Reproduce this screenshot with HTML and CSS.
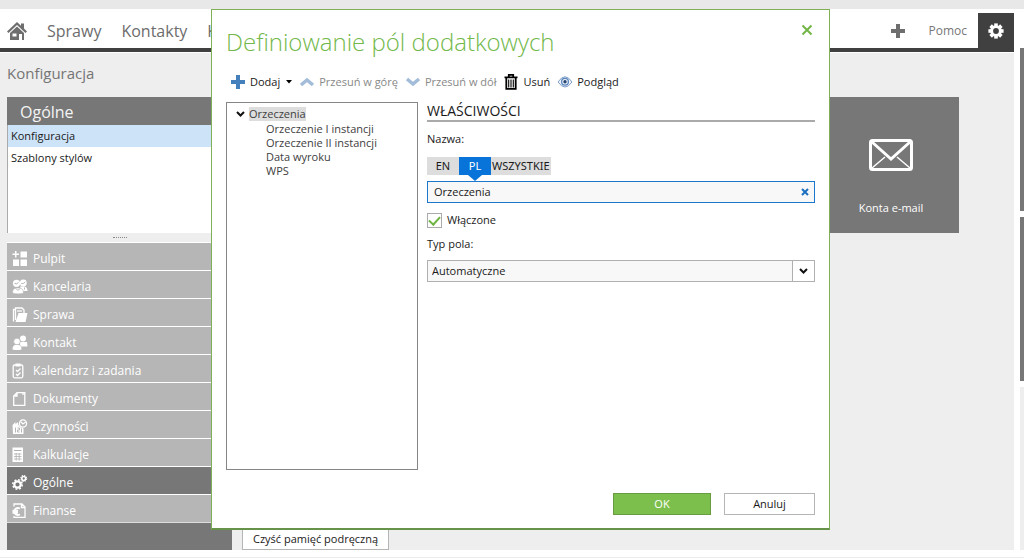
FILE: index.html
```html
<!DOCTYPE html>
<html lang="pl">
<head>
<meta charset="utf-8">
<meta name="viewport" content="width=device-width, initial-scale=1">
<title>Konfiguracja</title>
<link rel="stylesheet" href="styles.css">
</head>
<body>
<div class="page">
  <div class="app">
    <header class="topbar">
      <nav class="mainnav">
        <a href="#" class="home" aria-label="Start"><svg width="20" height="20" viewBox="0 0 20 20"><path fill="#6e6e6e" d="M10 1 L0 10.500 L1.500 12 L10 4 L18.500 12 L20 10.500 L17 7.600 V2.500 H14 V4.800Z"/><path fill="#6e6e6e" d="M10 5.500 L3 12 V19 H12 V13 H15 V19 H17 V12Z"/><path fill="#fff" d="M5.500 12.500 H9.500 V15.500 H5.500Z"/></svg></a>
        <a href="#">Sprawy</a>
        <a href="#">Kontakty</a>
        <a href="#">K</a>
      </nav>
      <div class="tools">
        <button class="add" type="button" aria-label="Nowy"><svg width="16" height="16" viewBox="0 0 16 16"><path fill="#6e6e6e" d="M6 1h4v5h5v4h-5v5H6v-5H1V6h5z"/></svg></button>
        <a href="#" class="help">Pomoc</a>
        <button class="gear" type="button" aria-label="Ustawienia"><svg width="16" height="16" viewBox="-8 -8 16 16"><g fill="#fff"><rect x="-1.800" y="-7.600" width="3.600" height="15.200"/><rect x="-1.800" y="-7.600" width="3.600" height="15.200" transform="rotate(45)"/><rect x="-1.800" y="-7.600" width="3.600" height="15.200" transform="rotate(90)"/><rect x="-1.800" y="-7.600" width="3.600" height="15.200" transform="rotate(135)"/><circle r="5.800"/></g><circle r="2.900" fill="#404040"/></svg></button>
      </div>
    </header>
    <main class="main">
      <h1 class="heading">Konfiguracja</h1>
      <div class="columns">
        <aside class="side">
          <h2 class="side-title">Ogólne</h2>
          <ul class="pages">
            <li><a href="#" class="current">Konfiguracja</a></li>
            <li><a href="#">Szablony stylów</a></li>
          </ul>
          <div class="grip"><span></span></div>
          <nav class="modules">
            <a href="#"><svg viewBox="0 0 16 16"><path d="M3 0h1.500v2.500H7V4H4.500v2.500H3V4H0.500V2.500H3zM8.500 0.500H15v6H8.500zM1 8.500h6V15H1zM8.500 8.500H15V15H8.500z"/></svg>Pulpit</a>
            <a href="#"><svg viewBox="0 0 16 16"><circle cx="4.500" cy="4.300" r="3.600"/><circle cx="11.300" cy="4" r="3.400"/><path d="M8 7.500h5q2.500 1 2.500 4.500H9z"/><path stroke="#b6b6b6" stroke-width=".6" d="M.5 14c0-3.500 1.500-4.700 4-5h3c2.500.3 4 1.700 4 5-3 1.200-8 1.200-11 0z"/><path fill="none" stroke="#b6b6b6" stroke-width="1" d="M2.500 4.500q2.500 1 4-1M9.300 4.500q2.500.5 4-1.500M4 9.500l2 2 2-2M12.500 8.500v2"/></svg>Kancelaria</a>
            <a href="#"><svg viewBox="0 0 16 16"><path class="line" d="M1.500 14.500V2.500H3M3.500 13V1H10l2 2v3"/><path d="M6.500 6H15.500L13.500 15H3.500z"/><path class="line" d="M5 4h5"/></svg>Sprawa</a>
            <a href="#"><svg viewBox="0 0 16 16"><circle cx="11" cy="3.500" r="3"/><path d="M7 7h8l.5 4.500H9z"/><circle cx="5" cy="6.500" r="3.300" stroke="#b6b6b6" stroke-width=".7"/><path d="M0.500 14.500c0-3 1-4.500 3-4.500h3c2 0 3 1.500 3 4.500q-4.500 1-9 0z"/></svg>Kontakt</a>
            <a href="#"><svg viewBox="0 0 16 16"><rect x="1.200" y="2" width="9.600" height="12.800" rx="1.500" class="line"/><path d="M3.500 0.500h5v3h-5z"/><path class="line" d="M4 7l1.500 1.500L8.500 5.500M4 11l1.500 1.500L8.500 9.500"/></svg>Kalendarz i zadania</a>
            <a href="#"><svg viewBox="0 0 16 16"><path class="line" d="M5 1.700H12.800V14.300H1.700V5zM5 1.700V5H1.700M11 1.700V4"/></svg>Dokumenty</a>
            <a href="#"><svg viewBox="0 0 16 16"><path d="M.5 6l3-3v2.500l2-2.500 1 3 5 3.500V15H1z"/><circle cx="11" cy="4.500" r="4.500" fill="#b6b6b6"/><circle cx="11" cy="4.500" r="3.600" class="line"/><path class="line" d="M9 3l2 2 2.500-2"/><path stroke="#b6b6b6" fill="none" d="M3.500 8.500v5M5.500 9h2v2h-2v2h2M9.500 9.500v4"/></svg>Czynności</a>
            <a href="#"><svg viewBox="0 0 16 16"><path d="M.5.500h10.500v14.500H.5z"/><path stroke="#b0b0b0" fill="none" d="M2 3.500h7.500"/><path stroke="#b0b0b0" fill="none" d="M2 7h7.500M2 9.500h7.500M2 12h7.500M4.200 6v7.500M7.200 6v7.500" stroke-width=".8"/></svg>Kalkulacje</a>
            <a href="#" class="active"><svg viewBox="0 0 16 16"><circle cx="5.500" cy="9.500" r="3.200" fill="none" stroke="#fff" stroke-width="2.200"/><circle cx="5.500" cy="9.500" r="4.700" fill="none" stroke="#fff" stroke-width="1.600" stroke-dasharray="1.900 1.790"/><circle cx="11.700" cy="3.500" r="1.900" fill="none" stroke="#fff" stroke-width="1.500"/><circle cx="11.700" cy="3.500" r="2.900" fill="none" stroke="#fff" stroke-width="1.200" stroke-dasharray="1.200 1.080"/></svg>Ogólne</a>
            <a href="#"><svg viewBox="0 0 16 16"><path class="line" d="M2 3.500V1h8l3 3v10.300H2V13M9.500 1v3.500H13"/><path fill="none" stroke="#fff" stroke-width="1.900" d="M8 5.500C4.500 4 2.500 6 2.500 8.500S4.500 13 8 11.500M.5 7.700H6M.5 9.800H6"/></svg>Finanse</a>
          </nav>
          <div class="side-foot"></div>
        </aside>
        <section class="content">
          <a href="#" class="tile">
            <svg width="44" height="32" viewBox="0 0 44 32" fill="none" stroke="#fff"><rect x="1.500" y="1.500" width="41" height="29" rx="2" stroke-width="3"/><path stroke-width="3" d="M3 3L22 20L41 3"/><path stroke-width="1.500" d="M3 29L16 18M41 29L28 18"/></svg>
            <span>Konta e-mail</span>
          </a>
          <button type="button" class="btn clear">Czyść pamięć podręczną</button>
        </section>
      </div>
    </main>
  </div>
  <div class="rail"><i class="dark"></i><i class="dark"></i><i></i></div>
</div>

<div class="dialog" role="dialog" aria-labelledby="dlg-title">
  <header class="dlg-head">
    <h2 id="dlg-title">Definiowanie pól dodatkowych</h2>
    <button type="button" class="close" aria-label="Zamknij"><svg width="12" height="12" viewBox="0 0 12 12"><path fill="none" stroke="#72b545" stroke-width="2" d="M1.500 1.500l9 9M10.500 1.500l-9 9"/></svg></button>
  </header>
  <div class="toolbar">
    <button type="button"><svg width="16" height="16" viewBox="0 0 16 16"><path fill="#4580bd" d="M6 1h4v5h5v4h-5v5H6v-5H1V6h5z"/></svg>Dodaj<svg class="drop" width="6" height="4" viewBox="0 0 6 4"><path d="M0 0h6L3 3.500z"/></svg></button>
    <button type="button" class="off"><svg width="16" height="16" viewBox="0 0 16 16"><path fill="none" stroke="#a3bcd9" stroke-width="3.500" d="M2 11l6-5 6 5"/></svg>Przesuń w górę</button>
    <button type="button" class="off"><svg width="16" height="16" viewBox="0 0 16 16"><path fill="none" stroke="#a3bcd9" stroke-width="3.500" d="M2 5l6 5 6-5"/></svg>Przesuń w dół</button>
    <button type="button"><svg width="16" height="16" viewBox="0 0 16 16" fill="none" stroke="#000"><path stroke-width="1.800" d="M1.500 3.300h13M3.300 4v10.800h9.400V4M5.800 2.500V.9h4.400v1.600"/><path stroke-width="1.100" d="M5.700 5.500v8M8 5.500v8M10.300 5.500v8"/></svg>Usuń</button>
    <button type="button"><svg width="16" height="16" viewBox="0 0 16 16" fill="none"><path stroke="#7f9fc8" fill="#eef3f9" d="M1 8Q8-2.500 15 8Q8 18 1 8z"/><circle cx="8" cy="7.800" r="3.400" stroke="#5b86bd" stroke-width="1.300"/><circle cx="8" cy="7.800" r="1.700" fill="#27466f"/></svg>Podgląd</button>
  </div>
  <div class="dlg-body">
    <div class="tree">
      <ul>
        <li class="root"><svg width="9" height="8" viewBox="0 0 9 8"><path fill="none" stroke="#111" stroke-width="2" d="M1 2l3.500 3.500L8 2"/></svg><span>Orzeczenia</span></li>
        <li>Orzeczenie I instancji</li>
        <li>Orzeczenie II instancji</li>
        <li>Data wyroku</li>
        <li>WPS</li>
      </ul>
    </div>
    <form class="props">
      <h3>WŁAŚCIWOŚCI</h3>
      <label class="lbl name-lbl" for="name">Nazwa:</label>
      <div class="langs">
        <button type="button">EN</button>
        <button type="button" class="on">PL</button>
        <button type="button" class="all">WSZYSTKIE</button>
      </div>
      <div class="field">
        <input id="name" type="text" value="Orzeczenia">
        <button type="button" aria-label="Wyczyść"><svg width="8" height="8" viewBox="0 0 8 8"><path fill="none" stroke="#1b6fc0" stroke-width="2" d="M1 1l6 6M7 1L1 7"/></svg></button>
      </div>
      <label class="check"><input type="checkbox" checked>Włączone</label>
      <label class="lbl type-lbl" for="type">Typ pola:</label>
      <div class="select">
        <select id="type"><option>Automatyczne</option></select>
        <span class="arrow"><svg width="9" height="8" viewBox="0 0 9 8"><path fill="none" stroke="#111" stroke-width="2" d="M1 2l3.500 3.500L8 2"/></svg></span>
      </div>
    </form>
  </div>
  <footer class="dlg-foot">
    <button type="button" class="btn ok">OK</button>
    <button type="button" class="btn cancel">Anuluj</button>
  </footer>
</div>
</body>
</html>
```
FILE: styles.css
```css
* { box-sizing: border-box; }
body {
  margin: 0;
  background: #fff;
  color: #1a1a1a;
  font: 11px/16px "Open Sans", "Noto Sans", sans-serif;
}
h1, h2, h3, ul { margin: 0; padding: 0; font-weight: 400; list-style: none; }
a { color: inherit; text-decoration: none; }
button, input, select { font: inherit; color: inherit; border: 0; padding: 0; margin: 0; background: none; border-radius: 0; }
svg { display: block; flex: none; }

.page {
  display: flex;
  gap: 6px;
  min-height: 100vh;
  border-top: 9px solid #e8e8e8;
  border-bottom: 1px solid #ececec;
  padding-bottom: 7px;
}
.app { flex: 1; display: flex; flex-direction: column; min-width: 0; }
.rail { width: 4px; padding-top: 39px; display: flex; flex-direction: column; gap: 6px; }
.rail i { flex: 1; background: #eee; }
.rail .dark { background: #777; }

.topbar { display: flex; justify-content: space-between; height: 43px; border-bottom: 4px solid #404040; }
.mainnav { display: flex; align-items: center; gap: 20px; padding: 5px 0 0 7px; font-size: 16px; line-height: 24px; color: #6c6c6c; }
.tools { display: flex; align-items: center; gap: 22px; padding-top: 4px; }
.help { font-size: 12px; line-height: 20px; color: #777; }
.gear { width: 36px; height: 39px; background: #404040; align-self: flex-start; display: flex; justify-content: center; padding-top: 10px; }
.tools .gear { margin-left: -11px; }

.main { flex: 1; display: flex; flex-direction: column; margin-top: 1px; padding: 8px 0 0 7px; background: #eee; }
.heading { font-size: 15px; line-height: 24px; color: #757575; }
.columns { flex: 1; display: flex; gap: 10px; margin-top: 12px; }
.side { width: 225px; display: flex; flex-direction: column; background: #777; }
.side-title { padding: 4px 13px 2px; font-size: 16px; line-height: 22px; color: #f4f4f4; }
.pages { height: 108px; background: #fff; border-left: 1px solid #aaa; }
.pages a { display: block; padding: 3px; }
.pages .current { background: #cde3f8; }
.grip { height: 9px; background: #eee; display: flex; justify-content: center; padding-top: 4px; }
.grip span { width: 14px; border-top: 1px dotted #888; }
.modules a {
  display: flex; align-items: center; gap: 5px;
  height: 28px; padding: 5px 5px 0;
  border-top: 1px solid #fff;
  background: #b6b6b6; color: #fff;
  font-size: 12px;
}
.modules .active { background: #777; }
.modules svg { width: 16px; height: 16px; fill: #fff; }
.modules .line { fill: none; stroke: #fff; stroke-width: 1.3; }
.side-foot { flex: 1; border-top: 1px solid #ddd; }

.content { flex: 1; display: flex; flex-direction: column; justify-content: space-between; align-items: flex-start; }
.tile {
  align-self: flex-end; margin-right: 55px;
  width: 136px; height: 136px; padding-top: 42px;
  display: flex; flex-direction: column; align-items: center; gap: 29px;
  background: #777; color: #fff;
}
.btn { height: 22px; border: 1px solid #b5b5b5; background: #fff; color: #1a1a1a; }
.clear { padding: 0 10px; }

.dialog {
  position: absolute; top: 9px; right: 194px; bottom: 28px; left: 211px;
  display: flex; flex-direction: column;
  padding: 14px 14px 13px;
  border: 1px solid #7fb058; border-bottom: 2px solid #67924a;
  background: #fff;
}
.dlg-head { display: flex; justify-content: space-between; align-items: flex-start; }
.dlg-head h2 { font-size: 24px; font-weight: 300; line-height: 36px; color: #72b84a; }
.close { margin-right: 2px; }
.toolbar { display: flex; gap: 7px; height: 24px; margin-top: 10px; padding-left: 4px; }
.toolbar button { display: flex; align-items: center; gap: 4px; white-space: nowrap; }
.toolbar .off { color: #888; }
.toolbar .drop { margin-left: 2px; }
.dlg-body { flex: 1; display: flex; gap: 9px; margin-top: 8px; }
.tree { width: 192px; border: 1px solid #868686; padding: 4px 9px; color: #404040; }
.tree li { padding-left: 30px; line-height: 14px; }
.tree .root { display: flex; align-items: center; gap: 4px; padding-left: 0; margin-bottom: 1px; }
.tree .root span { background: #ddd; }
.props { flex: 1; display: flex; flex-direction: column; align-items: stretch; }
.props h3 { font-size: 14px; line-height: 18px; border-bottom: 2px solid #aaa; }
.lbl { display: block; }
.name-lbl { margin-top: 9px; }
.langs { display: flex; margin-top: 10px; font-family: "Noto Sans", "Open Sans", sans-serif; }
.langs button { height: 18px; min-width: 32px; background: #ddd; padding: 0 1px; }
.langs .on { position: relative; background: #0874d9; color: #fff; }
.langs .on::after {
  content: ""; position: absolute; top: 18px; left: 9px;
  border: 7px solid transparent; border-top: 6px solid #0874d9; border-bottom: 0;
}
.field { display: flex; height: 22px; margin-top: 6px; border: 1px solid #1b78cc; background: #f8f8f8; }
.field input { flex: 1; min-width: 0; padding: 0 6px; outline: 0; }
.field button { width: 18px; display: flex; align-items: center; justify-content: center; }
.check { display: flex; align-items: center; gap: 5px; margin-top: 9px; align-self: flex-start; }
.check input { appearance: none; width: 15px; height: 15px; border: 1px solid #aaa; display: grid; place-items: center; }
.check input:checked::after { content: ""; width: 5px; height: 9px; border: solid #70b544; border-width: 0 2px 2px 0; transform: rotate(42deg); margin-bottom: 2px; }
.type-lbl { margin-top: 8px; }
.select { display: grid; grid-template-columns: 1fr 22px; height: 22px; margin-top: 8px; border: 1px solid #b0b0b0; background: #f8f8f8; }
.select select { grid-area: 1 / 1 / 2 / 3; appearance: none; padding: 0 4px; outline: 0; }
.arrow { grid-area: 1 / 2; display: flex; align-items: center; justify-content: center; border-left: 1px solid #b0b0b0; background: #fff; pointer-events: none; }
.dlg-foot { display: flex; justify-content: flex-end; gap: 13px; margin-top: 23px; }
.ok { width: 98px; background: #7dbf4c; border-color: #679d40; color: #fff; }
.cancel { width: 91px; }
```
